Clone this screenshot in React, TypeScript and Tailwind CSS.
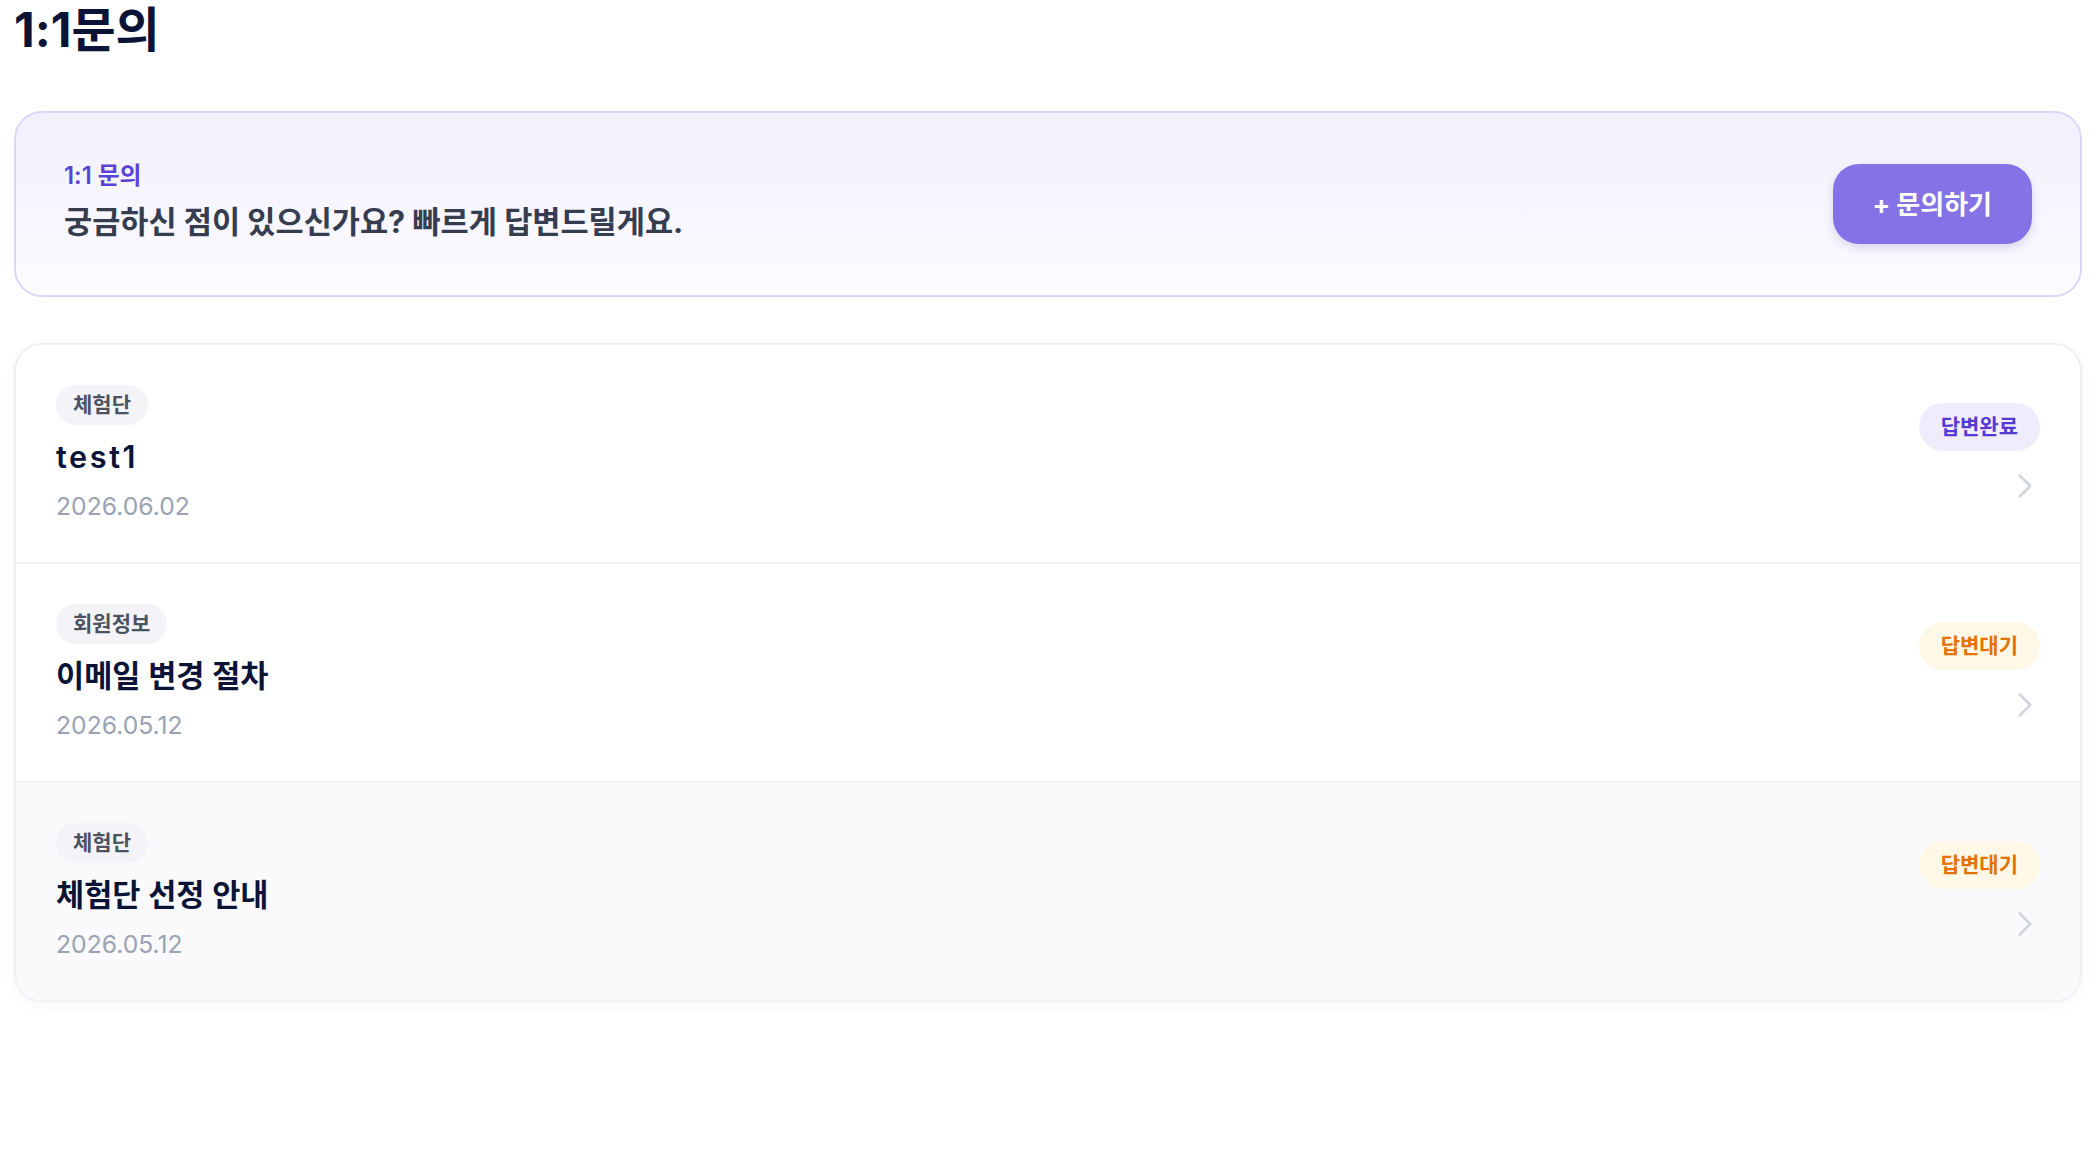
import { ChevronRight } from "lucide-react";

type Inquiry = {
    id: number;
    category: string;
    title: string;
    date: string;
    answered: boolean;
};

const inquiries: Inquiry[] = [
    { id: 1, category: "체험단", title: "test1", date: "2026.06.02", answered: true },
    { id: 2, category: "회원정보", title: "이메일 변경 절차", date: "2026.05.12", answered: false },
    { id: 3, category: "체험단", title: "체험단 선정 안내", date: "2026.05.12", answered: false },
];

// latin-only titles get a bit of extra tracking, the way the design shows them
const isLatin = (s: string) => /^[\x00-\x7F]+$/.test(s);

function StatusBadge({ answered }: { answered: boolean }) {
    return (
        <span
            className={`inline-flex h-[48px] items-center rounded-full px-[22px] text-[21px] font-bold ${answered
                ? "bg-[#efecfc] text-[#5639d2]"
                : "bg-[#fff8e6] text-[#e27300]"
                }`}
        >
            {answered ? "답변완료" : "답변대기"}
        </span>
    );
}

export default function App() {
    return (
        <div className="min-h-screen bg-white px-[14px] pt-[6px] font-[Inter,'Noto_Sans_CJK_KR',sans-serif]">
            <h1 className="text-[48px] font-bold leading-none text-[#0b1437]">1:1문의</h1>

            {/* Banner */}
            <section className="mt-[57px] flex h-[186px] items-center justify-between rounded-[28px] border-2 border-[#dcd6f8] bg-gradient-to-b from-[#f2f0fd] to-[#fcfbff] px-[48px]">
                <div className="pb-[6px]">
                    <p className="text-[23.8px] font-semibold leading-[28px] text-[#5b43d6]">1:1 문의</p>
                    <p className="mt-[14px] text-[30.6px] font-bold leading-[36px] text-[#363d4f]">
                        궁금하신 점이 있으신가요? 빠르게 답변드릴게요.
                    </p>
                </div>
                <button className="flex h-[80px] items-center rounded-[26px] bg-[#8572e6] px-[40px] text-[26px] font-bold text-white shadow-[0_4px_10px_rgba(80,60,180,0.18)]">
                    + 문의하기
                </button>
            </section>

            {/* List */}
            <ul className="mt-[46px] overflow-hidden rounded-[28px] border-2 border-[#f0f0f3] shadow-[0_4px_14px_rgba(0,0,0,0.04)]">
                {inquiries.map((item, i) => (
                    <li
                        key={item.id}
                        className={`flex items-center justify-between px-[40px] pb-[40px] pt-[40px] ${i < inquiries.length - 1 ? "border-b-2 border-[#f1f1f4]" : ""} ${i === 2 ? "bg-[#fafafc]" : "bg-white"}`}
                    >
                        <div>
                            <span className="inline-flex h-[40px] items-center rounded-full bg-[#f4f4f8] px-[17px] text-[21px] font-bold text-[#4b5262]">
                                {item.category}
                            </span>
                            <p
                                className={`mt-[14px] text-[30.6px] font-semibold leading-[36px] text-[#0b1437] ${isLatin(item.title) ? "tracking-[0.085em]" : ""}`}
                            >
                                {item.title}
                            </p>
                            <p className="mt-[15px] text-[24.7px] leading-[32px] text-[#9aa2b3]">{item.date}</p>
                        </div>
                        <div className="flex flex-col items-end">
                            <StatusBadge answered={item.answered} />
                            <ChevronRight className="mb-[-3px] mr-[-6px] mt-[14px] h-[42px] w-[42px] text-[#d1d5dc]" strokeWidth={1.5} />
                        </div>
                    </li>
                ))}
            </ul>
        </div>
    );
}
